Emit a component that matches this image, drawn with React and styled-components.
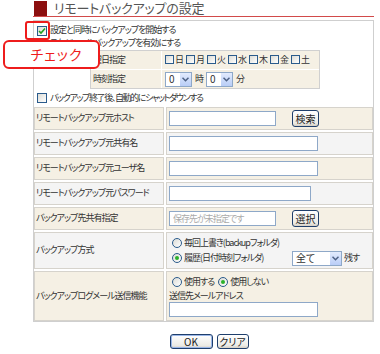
import React from 'react'
import styled, { createGlobalStyle } from 'styled-components'

const GlobalStyle = createGlobalStyle`
body {
  margin: 0;
  background: #fff;
  font-family: "Noto Sans CJK JP", "Noto Sans", sans-serif;
  font-size: 9px;
  letter-spacing: -1px;
  line-height: 1.2;
  color: #333;
  white-space: nowrap;
  font-feature-settings: "palt";
}
`

const beige = '#f5f0e4'
const gray = '#f4f4f4'

const Page = styled.div`
position: relative;
width: 341px;
padding-left: 33px;
`
const Header = styled.div`
display: flex;
align-items: center;
gap: 7px;
height: 16px;
border-bottom: 1px solid #d24a4a;
`
const RedMark = styled.div`
width: 13px;
height: 15px;
margin-left: 1px;
background: #8c0f0f;
`
const Title = styled.div`
font-size: 13px;
letter-spacing: -0.2px;
color: #555;
line-height: 16px;
`
const Box = styled.div`
margin-top: 3px;
border: 1px solid #cfcfcf;
`
const OptionRow = styled.label`
display: flex;
align-items: center;
gap: 3px;
height: ${p => p.$h || 13}px;
padding-left: 3px;
margin-top: ${p => p.$top || 0}px;
letter-spacing: ${p => (p.$tight ? '-1.4px' : 'inherit')};
`
const Box10 = styled.span`
display: inline-flex;
align-items: center;
justify-content: center;
box-sizing: border-box;
width: ${p => p.$size || 10}px;
height: ${p => p.$size || 10}px;
flex: none;
border: 1px solid #2a5b8c;
background: linear-gradient(135deg, #dcdcd6, #fff);
`
const Schedule = styled.div`
display: grid;
grid-template-columns: 70px 1fr;
gap: 1px;
margin: 0 0 0 56px;
width: 228px;
border: 1px solid #d0d0d0;
background: #fff;
`
const SchedLabel = styled.div`
display: flex;
align-items: center;
height: 18px;
padding-left: 2px;
background: ${beige};
`
const SchedField = styled.div`
display: flex;
align-items: center;
gap: ${p => p.$gap || 3}px;
height: 18px;
padding-left: 3px;
background: ${beige};
`
const Day = styled.span`
display: inline-flex;
align-items: center;
gap: 1px;
letter-spacing: 0;
`
const FormGrid = styled.div`
display: grid;
grid-template-columns: 130px 207px;
gap: 2px;
margin-top: 2px;
`
const LabelCell = styled.div`
box-sizing: border-box;
display: flex;
align-items: center;
height: ${p => p.$h || 23}px;
padding-left: 1px;
border: 1px solid #d6d3cc;
background: ${p => (p.$tone === 'gray' ? gray : beige)};
`
const FieldCell = styled.div`
box-sizing: border-box;
display: flex;
flex-direction: ${p => (p.$column ? 'column' : 'row')};
justify-content: ${p => (p.$column ? 'center' : 'flex-start')};
align-items: ${p => (p.$column ? 'flex-start' : 'center')};
height: ${p => p.$h || 23}px;
padding-left: 2px;
border: 1px solid #d6d3cc;
background: ${p => (p.$tone === 'gray' ? gray : beige)};
`
const TextInput = styled.input`
box-sizing: border-box;
width: ${p => p.$w}px;
height: 15px;
margin: 0;
padding: 0 3px;
border: 1px solid #8ea8c8;
background: #fff;
font: inherit;
letter-spacing: inherit;
color: #333;
outline: none;
&::placeholder {
  color: #aaa;
}
`
const XpButton = styled.button`
box-sizing: border-box;
height: ${p => p.$h || 17}px;
width: ${p => p.$w}px;
margin-left: ${p => p.$ml || 0}px;
padding: 0;
border: 1px solid #1f3f6c;
border-radius: 3px;
background: linear-gradient(#ffffff, #ecebe5 80%, #d6d0c5);
box-shadow: ${p => (p.$focus ? 'inset 0 0 0 1px #9bb7e8' : 'none')};
font: inherit;
font-size: 10px;
letter-spacing: 0;
color: #222;
cursor: pointer;
`
const SelectBox = styled.div`
box-sizing: border-box;
display: inline-flex;
align-items: center;
justify-content: space-between;
flex: none;
width: ${p => p.$w}px;
height: 15px;
padding-left: 3px;
border: 1px solid #8ea8c8;
background: #fff;
font-size: 10px;
letter-spacing: 0;
`
const ArrowBtn = styled.span`
display: flex;
align-items: center;
justify-content: center;
width: 11px;
height: 13px;
background: linear-gradient(#e2ebfd, #b9cdf7);
`
const RadioLine = styled.div`
display: flex;
align-items: center;
gap: 2px;
height: 15px;
padding-left: 3px;
`
const RadioLabel = styled.span`
width: ${p => (p.$w ? `${p.$w}px` : 'auto')};
`
const RadioDot = styled.span`
display: inline-flex;
align-items: center;
justify-content: center;
box-sizing: border-box;
width: 10px;
height: 10px;
flex: none;
border-radius: 50%;
border: 1px solid #2a5b8c;
background: linear-gradient(135deg, #dcdcd6, #fff);
margin-left: ${p => p.$ml || 0}px;
&::after {
  content: '';
  display: ${p => (p.$checked ? 'block' : 'none')};
  width: 4px;
  height: 4px;
  border-radius: 50%;
  background: #2bb12b;
}
`
const Caption = styled.div`
margin: 1px 0 1px 0;
`
const ButtonRow = styled.div`
display: flex;
justify-content: center;
gap: 4px;
margin-top: 12px;
padding-left: 11px;
`
const Highlight = styled.div`
position: absolute;
left: 25px;
top: 21px;
width: 21px;
height: 15px;
border: 2px solid #ee1c1c;
border-radius: 3px;
`
const Callout = styled.div`
position: absolute;
left: 3px;
top: 40px;
box-sizing: border-box;
width: 97px;
height: 29px;
display: flex;
align-items: center;
justify-content: center;
padding-left: 10px;
border: 2px solid #ee1c1c;
border-radius: 6px;
background: #fff;
color: #ee1c1c;
font-size: 14px;
letter-spacing: 1px;
`

const Check = ({ checked, size }) => (
  <Box10 $size={size}>
    {checked && (
      <svg width="8" height="8" viewBox="0 0 8 8">
        <path d="M1 4 L3 6 L7 1.5" fill="none" stroke="#21a121" strokeWidth="1.6" />
      </svg>
    )}
  </Box10>
)

const Select = ({ w, value }) => (
  <SelectBox $w={w}>
    <span>{value}</span>
    <ArrowBtn>
      <svg width="7" height="5" viewBox="0 0 7 5">
        <path d="M0.5 0.8 L3.5 3.8 L6.5 0.8" fill="none" stroke="#4d6185" strokeWidth="1.5" />
      </svg>
    </ArrowBtn>
  </SelectBox>
)

const days = ['日', '月', '火', '水', '木', '金', '土']

const App = () => {
  return (
    <>
      <GlobalStyle />
      <Page>
        <Header>
          <RedMark />
          <Title>リモートバックアップの設定</Title>
        </Header>
        <Box>
          <OptionRow $top={3}>
            <Check checked />
            設定と同時にバックアップを開始する
          </OptionRow>
          <OptionRow>
            <Check />
            スケジュールバックアップを有効にする
          </OptionRow>
          <Schedule>
            <SchedLabel>曜日指定</SchedLabel>
            <SchedField $gap={2}>
              {days.map(d => (
                <Day key={d}>
                  <Check size={9} />
                  {d}
                </Day>
              ))}
            </SchedField>
            <SchedLabel>時刻指定</SchedLabel>
            <SchedField>
              <Select w={27} value="0" />
              時
              <Select w={27} value="0" />
              分
            </SchedField>
          </Schedule>
          <OptionRow $top={2} $h={14} $tight>
            <Check />
            バックアップ終了後、自動的にシャットダウンする
          </OptionRow>
          <FormGrid>
            <LabelCell>リモートバックアップ元ホスト</LabelCell>
            <FieldCell>
              <TextInput $w={107} />
              <XpButton $w={27} $ml={16}>検索</XpButton>
            </FieldCell>

            <LabelCell $tone="gray">リモートバックアップ元共有名</LabelCell>
            <FieldCell $tone="gray">
              <TextInput $w={149} />
            </FieldCell>

            <LabelCell>リモートバックアップ元ユーザ名</LabelCell>
            <FieldCell>
              <TextInput $w={149} />
            </FieldCell>

            <LabelCell $tone="gray">リモートバックアップ元パスワード</LabelCell>
            <FieldCell $tone="gray">
              <TextInput $w={142} type="password" />
            </FieldCell>

            <LabelCell>バックアップ先共有指定</LabelCell>
            <FieldCell>
              <TextInput $w={107} placeholder="保存先が未指定です" />
              <XpButton $w={27} $ml={16}>選択</XpButton>
            </FieldCell>

            <LabelCell $tone="gray" $h={37}>バックアップ方式</LabelCell>
            <FieldCell $tone="gray" $h={37} $column>
              <RadioLine>
                <RadioDot />
                毎回上書き(backupフォルダ)
              </RadioLine>
              <RadioLine>
                <RadioDot $checked />
                <RadioLabel $w={106}>履歴(日付時刻フォルダ)</RadioLabel>
                <Select w={50} value="全て" />
                残す
              </RadioLine>
            </FieldCell>

            <LabelCell $h={50}>バックアップログメール送信機能</LabelCell>
            <FieldCell $h={50} $column>
              <RadioLine>
                <RadioDot />
                使用する
                <RadioDot $checked $ml={2} />
                使用しない
              </RadioLine>
              <Caption>送信先メールアドレス</Caption>
              <TextInput $w={149} />
            </FieldCell>
          </FormGrid>
        </Box>
        <ButtonRow>
          <XpButton $w={43} $h={15} $focus>OK</XpButton>
          <XpButton $w={32} $h={15}>クリア</XpButton>
        </ButtonRow>
        <Highlight />
        <Callout>チェック</Callout>
      </Page>
    </>
  )
}

export default App
